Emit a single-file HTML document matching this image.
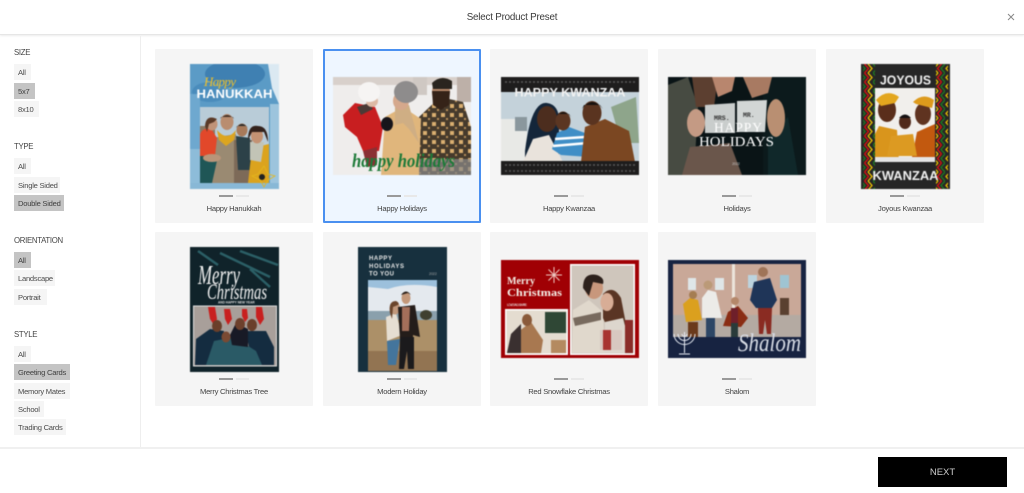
<!DOCTYPE html>
<html><head><meta charset="utf-8"><style>
*{box-sizing:border-box;margin:0;padding:0}
html,body{width:1024px;height:493px;overflow:hidden;background:#fff;font-family:"Liberation Sans",sans-serif;color:#444}
.a{position:absolute}
.hd{left:0;top:0;width:1024px;height:35px;border-bottom:1px solid #e6e6e6;box-shadow:0 1px 2px rgba(0,0,0,.08)}
.title{left:0;width:1024px;top:12px;text-align:center;font-size:9.8px;letter-spacing:-.2px;line-height:12px;color:#3a3a3a}
.lab{left:14px;font-size:7.8px;letter-spacing:-.3px;line-height:10px;margin-top:1px;color:#444}
.c{left:14px;height:16px;background:#f5f5f5;font-size:7.6px;letter-spacing:-.25px;line-height:17px;padding-left:4px;color:#4c4c4c;white-space:nowrap}
.c.s{background:#c4c4c4;color:#404040}
.card{width:158px;height:174px;background:#f5f5f5;border-radius:1px}
.card.sel{background:#eef6ff;outline:2px solid #4a90f0;outline-offset:-2px}
.card p{position:absolute;left:0;width:100%;top:155px;text-align:center;font-size:7.6px;letter-spacing:-.25px;line-height:10px;color:#444}
.card i{position:absolute;top:146px;height:2px;width:14px;background:#999}
.card b{position:absolute;top:146px;height:2px;width:13px;background:#e8e8e8}
svg.t{position:absolute;filter:blur(.5px);overflow:hidden}
.p{left:35px;top:15px;width:89px;height:125px}
.l{left:10px;top:28px;width:138px;height:98px}
</style></head><body>
<div class="a hd"></div>
<div class="a title">Select Product Preset</div>
<svg class="a" style="left:1007px;top:13px" width="8" height="8" viewBox="0 0 8 8"><path d="M1 1L7 7M7 1L1 7" stroke="#888" stroke-width="1"/></svg>
<div class="a" style="left:140px;top:36px;width:1px;height:411px;background:#eee"></div>
<div class="a" style="left:0;top:447px;width:1024px;height:2px;background:#f0f0f0"></div>

<div class="a lab" style="top:47px">SIZE</div>
<div class="a c" style="top:64px;width:17px">All</div>
<div class="a c s" style="top:83px;width:21px">5x7</div>
<div class="a c" style="top:101px;width:25px">8x10</div>
<div class="a lab" style="top:141px">TYPE</div>
<div class="a c" style="top:158px;width:17px">All</div>
<div class="a c" style="top:177px;width:46px">Single Sided</div>
<div class="a c s" style="top:195px;width:50px">Double Sided</div>
<div class="a lab" style="top:235px">ORIENTATION</div>
<div class="a c s" style="top:252px;width:17px">All</div>
<div class="a c" style="top:270px;width:41px">Landscape</div>
<div class="a c" style="top:289px;width:33px">Portrait</div>
<div class="a lab" style="top:329px">STYLE</div>
<div class="a c" style="top:346px;width:17px">All</div>
<div class="a c s" style="top:364px;width:56px">Greeting Cards</div>
<div class="a c" style="top:383px;width:56px">Memory Mates</div>
<div class="a c" style="top:401px;width:30px">School</div>
<div class="a c" style="top:419px;width:52px">Trading Cards</div>

<svg width="0" height="0" style="position:absolute"><defs>
<pattern id="plaid" width="9" height="9" patternUnits="userSpaceOnUse"><rect width="9" height="9" fill="#463a2c"/><rect width="4" height="4" fill="#d9ae70"/><rect x="5" y="5" width="2" height="2" fill="#b58c58"/></pattern>
<pattern id="zig" width="12" height="9" patternUnits="userSpaceOnUse"><path d="M0 0L4 4.500L0 9" fill="none" stroke="#1f7a20" stroke-width="1.300"/><path d="M3.500 0L7.500 4.500L3.500 9" fill="none" stroke="#e01010" stroke-width="1.300"/><path d="M7 0L11 4.500L7 9" fill="none" stroke="#f0c400" stroke-width="1.300"/></pattern>
<pattern id="zig2" width="12" height="9" patternUnits="userSpaceOnUse"><path d="M5 0L1 4.500L5 9" fill="none" stroke="#f0c400" stroke-width="1.300"/><path d="M8.500 0L4.500 4.500L8.500 9" fill="none" stroke="#e01010" stroke-width="1.300"/><path d="M12 0L8 4.500L12 9" fill="none" stroke="#1f7a20" stroke-width="1.300"/></pattern>
</defs></svg>

<!-- Happy Hanukkah -->
<div class="a card" style="left:155px;top:49px">
<svg class="t p" viewBox="0 0 89 125"><rect width="89" height="125" fill="#5b9bc6"/><ellipse cx="45" cy="10" rx="30" ry="14" fill="#3f80b2"/><ellipse cx="20" cy="28" rx="18" ry="10" fill="#4a8cbc"/><path d="M78 0H89V40L82 24Z" fill="#dbe9f2"/><rect x="80" y="40" width="9" height="85" fill="#9cc4dd"/><rect x="0" y="30" width="10" height="60" fill="#6ea8cf"/><rect x="0" y="85" width="10" height="40" fill="#8dbcd9"/><rect x="0" y="119" width="89" height="6" fill="#88b8d6"/>
<rect x="10" y="43" width="69" height="76" fill="#b9ccd8"/><rect x="10" y="62" width="15" height="20" fill="#8b7862"/>
<path d="M22 74L46 70L50 119L22 119Z" fill="#9a8a72"/><path d="M44 76L62 76L64 119L44 119Z" fill="#7d6a58"/><ellipse cx="37" cy="58" rx="6.500" ry="8" fill="#b98d70"/><path d="M30 55Q37 47 44 55L43 53L31 53Z" fill="#443228"/><path d="M27 66Q37 78 46 66L44 76L36 82L29 76Z" fill="#dca520"/>
<path d="M10 70Q14 62 22 66L27 74L25 92L10 92Z" fill="#e2482a"/><ellipse cx="22" cy="60" rx="5.500" ry="6.500" fill="#c09378"/><path d="M15 62Q16 50 27 55L24 58L19 60L17 68Z" fill="#5a3a28"/><path d="M10 92L28 92L22 119L10 119Z" fill="#1f5656"/><ellipse cx="22" cy="94" rx="9" ry="4" fill="#b8957a"/>
<path d="M46 72L60 74L62 106L48 106Z" fill="#2c4148"/><ellipse cx="52" cy="66" rx="5.500" ry="6.500" fill="#a87a5a"/><path d="M46 64Q52 56 58 64L56 62L47 62Z" fill="#2a2a2a"/>
<path d="M62 84L79 80L79 119L58 119Z" fill="#dba31e"/><path d="M60 78L74 78L71 98L60 96Z" fill="#c2c4b6"/><ellipse cx="67" cy="72" rx="6" ry="7.500" fill="#c39273"/><path d="M58 76Q58 60 68 62Q78 62 78 78L74 68L62 68Z" fill="#33221c"/>
<path d="M68 110L74 102L78 110L85 112L78 116L74 123L70 116L62 112Z" fill="none" stroke="#e5b71c" stroke-width=".8"/><circle cx="72" cy="113" r="3" fill="#222"/>
<text x="14" y="22" font-family="Liberation Serif,serif" font-style="italic" font-size="13" fill="#efc02a" textLength="32">Happy</text>
<text x="44.500" y="34" text-anchor="middle" font-weight="bold" font-size="12" fill="#fff" textLength="76" lengthAdjust="spacingAndGlyphs">HANUKKAH</text></svg>
<i style="left:64px"></i><b style="left:81px"></b><p>Happy Hanukkah</p></div>

<!-- Happy Holidays -->
<div class="a card sel" style="left:323px;top:49px">
<svg class="t l" viewBox="0 0 138 98"><rect width="138" height="98" fill="#efedec"/><rect x="0" y="0" width="138" height="8" fill="#d8d0cb"/><rect x="124" y="0" width="14" height="25" fill="#bdb0a8"/><rect x="80" y="0" width="14" height="18" fill="#cfc8c3"/>
<path d="M84 98L86 40L107 20L130 25L138 50L138 98Z" fill="url(#plaid)"/><ellipse cx="108" cy="15" rx="9" ry="11" fill="#b98b6c"/><path d="M99 14L117 14L116 28L108 33L100 28Z" fill="#352318"/><path d="M99 6Q108 -3 119 4L119 12L100 12Z" fill="#2a251f"/>
<rect x="85" y="82" width="53" height="16" fill="#8a8a8a" opacity=".7"/>
<path d="M48 98L52 40L70 30L88 42L86 98Z" fill="#e0b67c"/><path d="M62 26L76 28L86 66L76 52L70 46L62 48Z" fill="#cfae84"/><ellipse cx="68" cy="24" rx="8" ry="9" fill="#d5a88c"/><ellipse cx="73" cy="15" rx="12" ry="11" fill="#8e8c8c"/>
<path d="M10 38L22 26L42 30L50 50L46 74L30 74L24 60L12 50Z" fill="#c81e20"/><path d="M24 30L36 26L40 32L28 38Z" fill="#4b3a36"/><ellipse cx="39" cy="24" rx="6" ry="6" fill="#ddb9a4"/><ellipse cx="36" cy="15" rx="11" ry="10" fill="#f6f4f3"/><ellipse cx="54" cy="47" rx="6" ry="7" fill="#17151b"/><path d="M30 74L44 70L44 88L34 90Z" fill="#8a3034"/>
<text x="19" y="90" font-family="Liberation Serif,serif" font-style="italic" font-weight="bold" font-size="19" fill="#1d7a38" textLength="103" lengthAdjust="spacingAndGlyphs">happy holidays</text></svg>
<i style="left:64px"></i><b style="left:81px"></b><p>Happy Holidays</p></div>

<!-- Happy Kwanzaa -->
<div class="a card" style="left:490px;top:49px">
<svg class="t l" style="left:11px" viewBox="0 0 138 98"><rect width="138" height="98" fill="#c4d2da"/><rect x="0" y="42" width="26" height="44" fill="#e8e9e6"/><rect x="14" y="40" width="12" height="14" fill="#8a979d"/><path d="M110 30L135 20L138 66L120 66Z" fill="#7c9670" opacity=".75"/>
<path d="M24 74Q30 24 46 26Q60 28 58 50L58 85L24 85Z" fill="#14263a"/><ellipse cx="46" cy="42" rx="10" ry="13" fill="#4c2d1e"/><path d="M22 85L32 62L48 58L62 85Z" fill="#e9e3dc"/>
<path d="M51 72L56 56L68 50L84 56L88 80L60 78Z" fill="#3f8ec6"/><path d="M54 62L84 60M52 69L87 66" stroke="#fff" stroke-width="2.500"/><ellipse cx="62" cy="44" rx="7.500" ry="9.500" fill="#5b3622"/><path d="M55 40Q62 30 70 40L68 37L57 37Z" fill="#1b1410"/>
<path d="M80 85L84 50L104 42L128 54L134 85Z" fill="#7b4722"/><ellipse cx="91" cy="36" rx="9.500" ry="12" fill="#5a3420"/><path d="M81 32Q91 18 102 32L99 28L83 28Z" fill="#171210"/>
<rect width="138" height="15" fill="#1e1d1d"/><rect y="84" width="138" height="14" fill="#1e1d1d"/><path d="M4 5H134M4 88H134M4 94H134" stroke="#5a5a5a" stroke-width="1.400" stroke-dasharray="2 2"/>
<text x="69" y="19.500" text-anchor="middle" font-weight="bold" font-size="12" fill="#f2f2f2" textLength="111" lengthAdjust="spacingAndGlyphs">HAPPY KWANZAA</text></svg>
<i style="left:64px"></i><b style="left:81px"></b><p>Happy Kwanzaa</p></div>

<!-- Holidays -->
<div class="a card" style="left:658px;top:49px">
<svg class="t l" viewBox="0 0 138 98"><rect width="138" height="98" fill="#0a1416"/><rect x="95" y="0" width="43" height="98" fill="#0c1a1c"/><path d="M0 8L20 0L30 30L26 98L0 98Z" fill="#474b42"/><path d="M14 98L22 70L62 66L74 98Z" fill="#6a564b"/><path d="M24 0H50L46 30L28 30Z" fill="#5c3f30"/><path d="M44 0H67L64 14L50 20Z" fill="#b8866e"/><path d="M75 0H104L100 16L84 21Z" fill="#a87a62"/><path d="M100 60L120 40L130 98L100 98Z" fill="#10282a"/>
<ellipse cx="28" cy="46" rx="9" ry="14" fill="#c49a84"/><ellipse cx="108" cy="41" rx="9" ry="19" fill="#b98f72"/>
<path d="M37 28L67 26L67 56L37 56Z" fill="#c9cdcc"/><path d="M69 24L99 23L97 55L69 55Z" fill="#d2d6d5"/>
<text x="46" y="43" font-family="Liberation Mono,monospace" font-weight="bold" font-size="6.500" fill="#333">MRS.</text><text x="75" y="40" font-family="Liberation Mono,monospace" font-weight="bold" font-size="6.500" fill="#333">MR.</text>
<text x="70" y="55" text-anchor="middle" font-family="Liberation Serif,serif" font-size="13.500" fill="#fff" textLength="48">HAPPY</text><text x="68.500" y="69" text-anchor="middle" font-family="Liberation Serif,serif" font-size="13.500" fill="#fff" textLength="75" lengthAdjust="spacingAndGlyphs">HOLIDAYS</text><text x="68" y="88" text-anchor="middle" font-size="3.500" fill="#ccc">2022</text></svg>
<i style="left:64px"></i><b style="left:81px"></b><p>Holidays</p></div>

<!-- Joyous Kwanzaa -->
<div class="a card" style="left:826px;top:49px">
<svg class="t p" viewBox="0 0 89 125"><rect width="89" height="125" fill="#262626"/><rect x="2" y="0" width="12" height="125" fill="url(#zig)"/><rect x="75" y="0" width="12" height="125" fill="url(#zig2)"/>
<rect x="14" y="24" width="60" height="74" fill="#f1efec"/>
<path d="M14 70L18 62L36 66L38 98L14 98Z" fill="#d9951c"/><path d="M56 68L74 60L74 98L50 98Z" fill="#c2590f"/><path d="M30 72L52 70L56 92L26 92Z" fill="#dc9a22"/><ellipse cx="26" cy="46" rx="9" ry="12" fill="#5a2e1b"/><path d="M15 36Q26 24 38 33L34 39L20 42Z" fill="#e3a61e"/><ellipse cx="62" cy="50" rx="8" ry="11" fill="#5f3320"/><path d="M52 38Q62 28 73 36L71 44L55 40Z" fill="#dd9a1c"/><ellipse cx="44" cy="58" rx="6" ry="7" fill="#50291a"/><path d="M38 54Q44 47 50 54Z" fill="#141012"/><rect x="14" y="93" width="60" height="5" fill="#e5e5e5"/>
<text x="44.500" y="20.500" text-anchor="middle" font-weight="bold" font-size="12.500" fill="#f0f0f0" textLength="51" lengthAdjust="spacingAndGlyphs">JOYOUS</text>
<text x="44.500" y="116" text-anchor="middle" font-weight="bold" font-size="12.500" fill="#f0f0f0" textLength="66" lengthAdjust="spacingAndGlyphs">KWANZAA</text></svg>
<i style="left:64px"></i><b style="left:81px"></b><p>Joyous Kwanzaa</p></div>

<!-- Merry Christmas Tree -->
<div class="a card" style="left:155px;top:232px">
<svg class="t p" viewBox="0 0 89 125"><rect width="89" height="125" fill="#10232a"/><path d="M30 6L80 30M50 4L88 18M8 4L28 18M60 22L80 40" stroke="#2b5f66" stroke-width="2.500"/>
<text x="8" y="37" font-family="Liberation Serif,serif" font-style="italic" font-size="27" fill="#f1f1f1" textLength="42" lengthAdjust="spacingAndGlyphs">Merry</text><text x="17" y="52" font-family="Liberation Serif,serif" font-style="italic" font-size="22" fill="#f1f1f1" textLength="60" lengthAdjust="spacingAndGlyphs">Christmas</text><text x="28" y="56.500" font-size="3.200" font-weight="bold" fill="#ddd">AND HAPPY NEW YEAR</text>
<rect x="3.500" y="59" width="83" height="60" fill="#a89f9a" stroke="#dcdcdc" stroke-width="1"/><path d="M18 60h7l2 12l-3 6l-4-6zM34 62h6l2 10l-4 6l-3-6zM52 62h5l1 9l-3 4l-3-6zM66 60h6l2 12l-4 6l-4-8z" fill="#c8201f"/>
<path d="M5 118L6 92L20 82L34 84L30 118Z" fill="#142c40"/><path d="M56 84L76 84L84 100L84 118L62 118Z" fill="#142c40"/><path d="M16 118L24 94L44 90L66 104L72 118Z" fill="#2a5a66"/><path d="M40 88L46 76L58 82L58 100L42 98Z" fill="#181a26"/><ellipse cx="27" cy="79" rx="5" ry="6" fill="#6a3f2a"/><ellipse cx="36" cy="90" rx="4.500" ry="5.500" fill="#7a4a33"/><ellipse cx="50" cy="77" rx="5" ry="6" fill="#6d402c"/><ellipse cx="62" cy="78" rx="5" ry="6" fill="#6a3f2a"/></svg>
<i style="left:64px"></i><b style="left:81px"></b><p>Merry Christmas Tree</p></div>

<!-- Modern Holiday -->
<div class="a card" style="left:323px;top:232px">
<svg class="t p" style="left:35px" viewBox="0 0 89 125"><rect width="89" height="125" fill="#17303e"/><text x="11" y="13" font-weight="bold" font-size="6" fill="#e8e8e8" textLength="23">HAPPY</text><text x="11" y="21" font-weight="bold" font-size="6" fill="#e8e8e8" textLength="35">HOLIDAYS</text><text x="11" y="28.500" font-weight="bold" font-size="6" fill="#e8e8e8" textLength="25">TO YOU</text><text x="71" y="28" font-size="3.500" fill="#aaa">2022</text>
<rect x="10" y="33" width="69" height="91" fill="#e4e9ee"/><path d="M10 33H79V40Q50 35 30 42L10 40Z" fill="#9cc0dc"/><rect x="10" y="64" width="69" height="9" fill="#8aa0ac"/><rect x="10" y="73" width="69" height="51" fill="#ac9068"/><rect x="10" y="104" width="69" height="20" fill="#927452"/><ellipse cx="68" cy="68" rx="6" ry="5" fill="#3f4030"/>
<path d="M28 70L38 66L44 88L29 94Z" fill="#e6ded2"/><path d="M29 94L42 92L38 118L30 118Z" fill="#44759c"/><ellipse cx="37" cy="61" rx="5" ry="6.500" fill="#c0987c"/><path d="M32 66Q30 54 38 54Q42 56 40 58L35 60L34 72Z" fill="#6a452c"/>
<path d="M40 60L57 58L62 90L55 88L55 92L42 92Z" fill="#241d1a"/><path d="M44 60L52 60L51 84L44 84Z" fill="#a46f5a"/><path d="M42 90L56 90L56 122L50 122L49 104L46 122L41 122Z" fill="#1b1a1c"/><ellipse cx="48" cy="51" rx="4.500" ry="6" fill="#c3987a"/><path d="M43 48Q48 41 53 48L50 46Z" fill="#2b2018"/></svg>
<i style="left:64px"></i><b style="left:81px"></b><p>Modern Holiday</p></div>

<!-- Red Snowflake Christmas -->
<div class="a card" style="left:490px;top:232px">
<svg class="t l" style="left:11px" viewBox="0 0 138 98"><rect width="138" height="98" fill="#a00004"/>
<rect x="69" y="4" width="65" height="91" fill="#fff"/><rect x="70.500" y="5.500" width="62" height="88" fill="#cfc6bc"/><path d="M71 93L72 50L88 40L102 52L104 93Z" fill="#e0d8cc"/><path d="M72 58L100 52L100 60L74 66Z" fill="#786a5e"/><ellipse cx="93" cy="28" rx="9" ry="11" fill="#c8977c"/><path d="M82 28Q82 12 96 15Q104 18 102 24L92 22L88 36Z" fill="#2d211c"/><path d="M102 34Q112 24 120 38L128 80L112 80L102 58Z" fill="#5a3524"/><ellipse cx="106" cy="42" rx="6.500" ry="9" fill="#d8ad96"/><path d="M104 62L122 58L131 93L104 93Z" fill="#ddd6cd"/><rect x="99" y="70" width="22" height="20" fill="#d8c8c0"/><rect x="102" y="70" width="8" height="20" fill="#a83330"/><rect x="124" y="60" width="8" height="33" fill="#8a2c28"/>
<rect x="4" y="49" width="63" height="46" fill="#fff"/><rect x="5.500" y="50.500" width="60" height="43" fill="#e4dcd0"/><path d="M44 52H65V73H44Z" fill="#2f4735"/><path d="M20 93L17 72L30 62L42 80L40 93Z" fill="#a87850"/><path d="M6 93L10 74L20 64L20 93Z" fill="#3a3030"/><ellipse cx="26" cy="60" rx="5" ry="6" fill="#8a5a3a"/><rect x="50" y="80" width="15" height="13" fill="#b48a60"/>
<text x="6" y="24" font-family="Liberation Serif,serif" font-weight="bold" font-size="10.500" fill="#f5f0e8" textLength="28" lengthAdjust="spacingAndGlyphs">Merry</text><text x="6" y="36" font-family="Liberation Serif,serif" font-weight="bold" font-size="10.500" fill="#f5f0e8" textLength="55" lengthAdjust="spacingAndGlyphs">Christmas</text><text x="6" y="46" font-size="3.200" fill="#eee" textLength="20">LOVE SALLY &amp; KATIE</text>
<path d="M53 7V23M45 15H61M47.500 9.500L58.500 20.500M58.500 9.500L47.500 20.500" stroke="#eec9c2" stroke-width="1"/></svg>
<i style="left:64px"></i><b style="left:81px"></b><p>Red Snowflake Christmas</p></div>

<!-- Shalom -->
<div class="a card" style="left:658px;top:232px">
<svg class="t l" style="left:10px" viewBox="0 0 138 98"><rect width="138" height="98" fill="#172341"/><rect x="5" y="4" width="128" height="73" fill="#c9a898"/><rect x="5" y="55" width="128" height="22" fill="#b4aaa2"/><rect x="64" y="4" width="3" height="52" fill="#ece4db"/><rect x="20" y="18" width="8" height="12" fill="#dfe6e8"/><rect x="47" y="18" width="9" height="12" fill="#dfe6e8"/><rect x="80" y="15" width="9" height="13" fill="#bcd3de"/><rect x="112" y="15" width="9" height="13" fill="#9fc4d2"/><rect x="112" y="38" width="9" height="17" fill="#5a4030"/>
<path d="M15 44L22 38L30 40L34 60L18 62Z" fill="#dba01e"/><rect x="20" y="62" width="10" height="15" fill="#6a3a1c"/><circle cx="25" cy="35" r="4" fill="#a57d52"/>
<path d="M34 38L40 30L48 32L54 58L34 58Z" fill="#ecebe8"/><rect x="38" y="58" width="9" height="19" fill="#2d4665"/><circle cx="40" cy="25" r="4.500" fill="#bb9a78"/>
<path d="M55 66L60 52L70 46L80 58L73 67Z" fill="#8a2d14"/><rect x="63" y="48" width="7" height="15" fill="#6e1f2a"/><rect x="63" y="63" width="7" height="14" fill="#293b3a"/><circle cx="67" cy="41" r="4" fill="#b4876a"/>
<path d="M82 40L86 22L102 18L109 40L104 48L88 48Z" fill="#1f3558"/><path d="M90 48H104L103 74H99L97 60L95 74H91Z" fill="#8a2b22"/><circle cx="95" cy="12" r="5" fill="#9f7458"/>
<rect x="0" y="77" width="138" height="21" fill="#172341"/>
<path d="M6 74A10.500 10.500 0 0 0 27 74M10 74A6.500 6.500 0 0 0 23 74M14 74A2.500 2.500 0 0 0 19 74M16.500 72V93M11 94H22" stroke="#e8ecf4" stroke-width="1" fill="none"/>
<text x="70" y="91" font-family="Liberation Serif,serif" font-style="italic" font-size="25" fill="#d8dde6" textLength="63" lengthAdjust="spacingAndGlyphs">Shalom</text></svg>
<i style="left:64px"></i><b style="left:81px"></b><p>Shalom</p></div>

<div class="a" style="left:878px;top:457px;width:129px;height:30px;background:#000;color:#ccc;font-size:9.5px;line-height:31px;text-align:center">NEXT</div>
</body></html>
